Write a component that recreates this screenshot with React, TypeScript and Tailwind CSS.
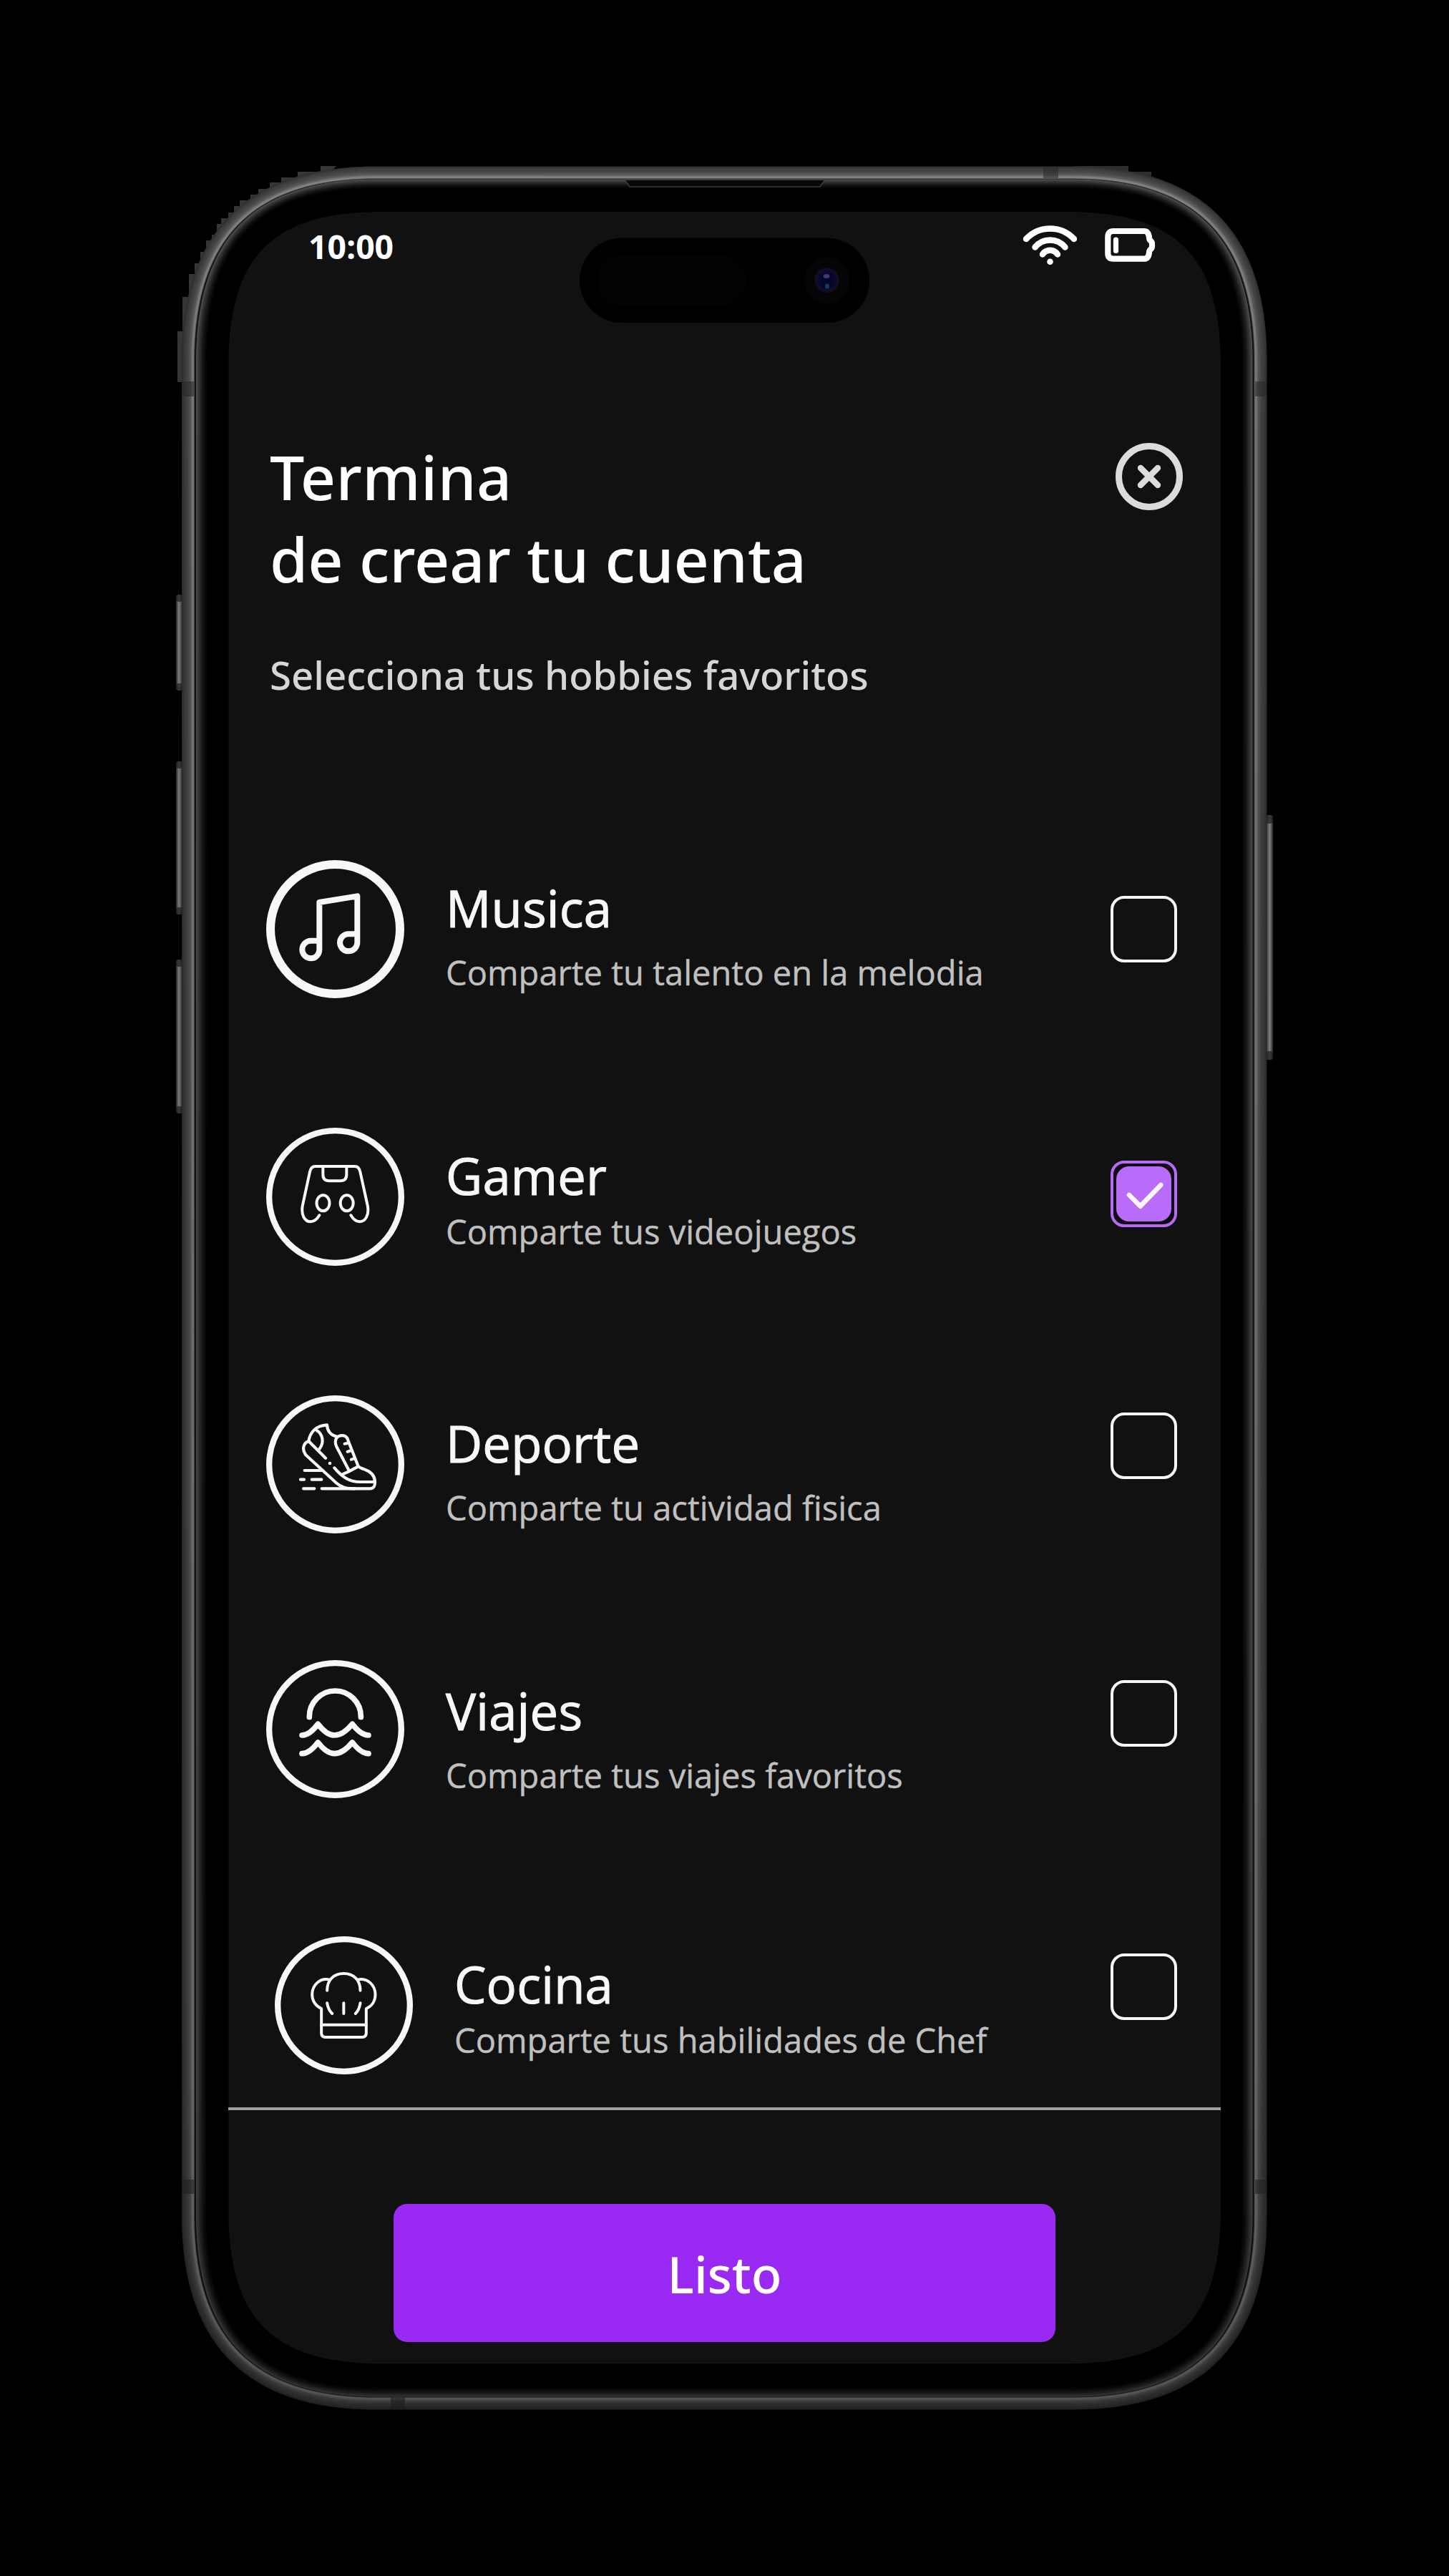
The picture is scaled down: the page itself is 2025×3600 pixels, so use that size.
import type { ReactNode } from 'react';

/* Rounded rectangle with continuous corners. */
function squircle(l: number, t: number, r: number, b: number, a: number, mid: number) {
  const c = (8 * mid - a) / 3;
  return (
    `M${l} ${t + a}C${l} ${t + c} ${l + c} ${t} ${l + a} ${t}` +
    `H${r - a}C${r - c} ${t} ${r} ${t + c} ${r} ${t + a}` +
    `V${b - a}C${r} ${b - c} ${r - c} ${b} ${r - a} ${b}` +
    `H${l + a}C${l + c} ${b} ${l} ${b - c} ${l} ${b - a}Z`
  );
}

/* Brightness of the metal rim, by distance from the outer edge. */
const rim: [number, number][] = [
  [0, 46], [2, 58], [8, 74], [12, 94], [15, 134], [16.5, 124], [17.5, 50], [18.5, 18],
  [19.5, 20], [20, 84], [22, 70], [25, 48], [29, 24], [33, 8], [36, 0],
];

function shade(i: number) {
  for (let k = 1; k < rim.length; k++) {
    const [x0, v0] = rim[k - 1];
    const [x1, v1] = rim[k];
    if (i <= x1) return Math.round(v0 + ((v1 - v0) * (i - x0)) / (x1 - x0));
  }
  return 0;
}

function ring(i: number) {
  const y = i * (i > 20 ? 0.88 : 0.98);
  return squircle(254 + i, 232.5 + y, 1770.5 - i, 3367.5 - y, 270 - i * 0.85, 68 - i * 0.293);
}

function PhoneFrame() {
  const steps = Array.from({ length: 73 }, (_, k) => k / 2);
  return (
    <svg className="absolute inset-0 h-[3600px] w-[2025px]" viewBox="0 0 2025 3600" fill="none">
      <defs>
        <linearGradient id="fall" x1="0" y1="230" x2="0" y2="3370" gradientUnits="userSpaceOnUse">
          <stop offset="0" stopColor="#000" stopOpacity="0" />
          <stop offset="0.12" stopColor="#000" stopOpacity="0.1" />
          <stop offset="0.85" stopColor="#000" stopOpacity="0.2" />
          <stop offset="1" stopColor="#000" stopOpacity="0.36" />
        </linearGradient>
        <linearGradient id="keyL" x1="246" x2="255" y1="0" y2="0" gradientUnits="userSpaceOnUse">
          <stop offset="0" stopColor="#262626" />
          <stop offset="0.45" stopColor="#7c7c7c" />
          <stop offset="1" stopColor="#2a2a2a" />
        </linearGradient>
        <linearGradient id="keyR" x1="1769" x2="1779" y1="0" y2="0" gradientUnits="userSpaceOnUse">
          <stop offset="0" stopColor="#2a2a2a" />
          <stop offset="0.55" stopColor="#808080" />
          <stop offset="1" stopColor="#262626" />
        </linearGradient>
        <radialGradient id="lens">
          <stop offset="0" stopColor="#03032e" />
          <stop offset="0.6" stopColor="#06062f" />
          <stop offset="0.85" stopColor="#131024" />
          <stop offset="1" stopColor="#08070f" />
        </radialGradient>
      </defs>
      <path
        fill="#363636"
        d="M470 232H448V240H416V248H393V255H377V264H361V272H350V280H335V288H327V297H319V305H309V313H303V328H296V336H288V352H280V368H272V383H264V415H255V463H248V534H262L300 420Z"
      />
      <path fill="#2e2e2e" d="M1500 232H1577V240H1609V250L1560 250Z" />
      {[
        [831, 134],
        [1064, 214],
        [1341, 215],
      ].map(([y, h]) => (
        <g key={y}>
          <rect x="246" y={y} width="9" height={h} rx="4" fill="url(#keyL)" />
          <rect x="246" y={y} width="9" height="10" rx="4" fill="#1c1c1c" opacity="0.7" />
          <rect x="246" y={y + h - 10} width="9" height="10" rx="4" fill="#1c1c1c" opacity="0.7" />
        </g>
      ))}
      <rect x="1769" y="1139" width="10" height="342" rx="4" fill="url(#keyR)" />
      <rect x="1769" y="1139" width="10" height="12" rx="4" fill="#1c1c1c" opacity="0.7" />
      <rect x="1769" y="1469" width="10" height="12" rx="4" fill="#1c1c1c" opacity="0.7" />
      {steps.map((i) => {
        const v = shade(i);
        return <path key={i} d={ring(i)} fill={`rgb(${v},${v},${v})`} />;
      })}
      <g fill="#2c2c2c" opacity="0.6">
        <rect x="254" y="533" width="17" height="21" />
        <rect x="1754" y="533" width="16" height="21" />
        <rect x="254" y="3046" width="17" height="20" />
        <rect x="1754" y="3046" width="16" height="20" />
        <rect x="1458" y="233" width="21" height="16" />
        <rect x="546" y="3351" width="20" height="16" />
      </g>
      <path d={ring(0)} fill="url(#fall)" />
      <path d="M874 252H1152L1146 261.5H880Z" fill="#070707" />
      <path d="M872 252.5H874L880 261H1146L1152 252.5H1154" stroke="#3c3c3c" strokeWidth="1.5" />
      <path d={squircle(319.3, 296, 1706, 3303.3, 215, 50)} fill="#111" />
      <rect x="810" y="332.5" width="405" height="118.5" rx="59.25" fill="#000" />
      <rect x="834" y="356" width="210" height="72" rx="36" fill="#020202" />
      <circle cx="1155.5" cy="392" r="32" fill="#050406" />
      <circle cx="1155.5" cy="391.5" r="18" fill="url(#lens)" />
      <ellipse cx="1155" cy="386" rx="4.5" ry="3" fill="#3c3a72" />
      <ellipse cx="1156" cy="400" rx="3" ry="3.5" fill="#163c56" />
    </svg>
  );
}

function Badge({ box, stroke, ring: w, children }: { box: string; stroke: number; ring: number; children: ReactNode }) {
  const [x, y] = box.split(' ').map(Number);
  return (
    <svg
      className="h-[193px] w-[193px] shrink-0"
      viewBox={box}
      fill="none"
      stroke="#f7f7f7"
      strokeWidth={stroke}
      strokeLinecap="round"
      strokeLinejoin="round"
    >
      <circle cx={x + 289.5} cy={y + 289.5} r={289.5 - w / 2} strokeWidth={w} />
      {children}
    </svg>
  );
}

const musicIcon = (
  <Badge box="98 97 579 579" stroke={24} ring={36}>
    <path
      strokeLinecap="butt"
      d="M321 435H286A37 37 0 0 0 249 472A37 37 0 0 0 286 509A35 37 0 0 0 321 472V274L480 248V443A37 36 0 0 1 443 479A36 36 0 0 1 407 443A36 36 0 0 1 443 407H480"
    />
  </Badge>
);

const gamerIcon = (
  <Badge box="98 79 579 579" stroke={12} ring={25}>
    <path d="M321 446C311 463 300 473 284 473C260 473 244 446 250 408L281 264Q286 241 303 241H470Q487 241 492 264L523 405C531 446 513 473 490 473C474 473 463 463 453 446" />
    <path d="M336 246V275Q336 302 362 302H409Q435 302 435 275V246" />
    <ellipse cx="336.5" cy="395" rx="27" ry="33" />
    <ellipse cx="436" cy="395" rx="27" ry="33" />
  </Badge>
);

const shoeIcon = (
  <Badge box="98 90 579 579" stroke={12.5} ring={25}>
    <path d="M276 282C282 243 308 217 353 214C354 238 368 258 392 262" />
    <path d="M309 236C335 252 343 288 321 315" />
    <path d="M445 405L393 305C383 284 389 264 409 259C426 256 437 264 441 278L484 388" />
    <path d="M427 293L440 290M439 326L453 322M455 359L466 355" />
    <path d="M276 282L347 353M384 394C415 430 444 453 492 453H550" />
    <path d="M276 282C253 290 247 318 264 340L393 458C410 473 432 481 462 481H533C549 481 555 470 554 450C552 424 535 409 512 401C500 397 490 394 484 388L445 409L418 421" />
    <path d="M259 405H335M242 443H257M289 443H330M254 481H300M331 481H470" />
    <circle cx="365" cy="375" r="7" fill="#f7f7f7" stroke="none" />
  </Badge>
);

const travelIcon = (
  <Badge box="98 90 579 579" stroke={23} ring={25}>
    <path d="M279 329V327A108 108 0 0 1 495 327V329" />
    <path d="M248 405C274 405 297 382 315 358C338 388 360 405 384 405C410 405 436 386 459 358C479 384 502 405 527 405" />
    <path d="M248 482C274 482 297 459 315 435C338 465 360 482 384 482C410 482 436 463 459 435C479 461 502 482 527 482" />
  </Badge>
);

const chefIcon = (
  <Badge box="132.5 79 579 579" stroke={12} ring={25}>
    <path d="M352 306C352 262 380 235 421.5 235S491 262 491 306" />
    <path d="M363 261C322 251 289 284 289 323C289 350 305 372 328 382V485Q328 502 345 502H499Q516 502 516 485V382C540 372 554 350 554 323C554 284 521 251 480 261" />
    <path d="M328 450H516M352 359C355 378 362 392 373 403M421.5 359V403M491 359C488 378 482 392 471 403" />
  </Badge>
);

type Hobby = {
  name: string;
  text: string;
  icon: ReactNode;
  row: string;
  title: string;
  desc: string;
  box: string;
  checked?: boolean;
};

const hobbies: Hobby[] = [
  { name: 'Musica', text: 'Comparte tu talento en la melodia', icon: musicIcon, row: 'pl-[53px] mb-[181px]', title: 'mt-[22px]', desc: 'mt-[17px]', box: 'mt-[50px]' },
  { name: 'Gamer', text: 'Comparte tus videojuegos', icon: gamerIcon, row: 'pl-[53px] mb-[181px]', title: 'mt-[22px]', desc: 'mt-[5px]', box: 'mt-[46px]', checked: true },
  { name: 'Deporte', text: 'Comparte tu actividad fisica', icon: shoeIcon, row: 'pl-[53px] mb-[177px]', title: 'mt-[22px]', desc: 'mt-[17px]', box: 'mt-[24px]' },
  { name: 'Viajes', text: 'Comparte tus viajes favoritos', icon: travelIcon, row: 'pl-[53px] mb-[193px]', title: 'mt-[26px]', desc: 'mt-[17px]', box: 'mt-[28px]' },
  { name: 'Cocina', text: 'Comparte tus habilidades de Chef', icon: chefIcon, row: 'pl-[65px]', title: 'mt-[22px]', desc: 'mt-[5px]', box: 'mt-[24px]' },
];

function Checkbox({ checked, className }: { checked?: boolean; className: string }) {
  if (checked) {
    return (
      <button className={`flex h-[93px] w-[93px] shrink-0 items-center justify-center rounded-[19px] border-4 border-[#b56bf2] bg-[#0e0b14] ${className}`}>
        <span className="flex h-[77px] w-[77px] items-center justify-center rounded-[18px] bg-[#b96bf9]">
          <svg className="h-[77px] w-[77px]" viewBox="180 240 231 231" fill="none" stroke="#f9f7fc" strokeWidth="20" strokeLinecap="round" strokeLinejoin="round">
            <path d="M234 360L281 407L367 318" />
          </svg>
        </span>
      </button>
    );
  }
  return <button className={`h-[93px] w-[93px] shrink-0 rounded-[19px] border-4 border-[#f5f5f5] ${className}`} />;
}

function HobbyRow({ h }: { h: Hobby }) {
  return (
    <li className={`flex h-[193px] items-start pr-[61px] ${h.row}`}>
      {h.icon}
      <div className="ml-[58px] grow whitespace-nowrap">
        <h2 className={`text-[70.5px] leading-[90px] tracking-[0.2px] text-[#f7f7f7] [-webkit-text-stroke:1.1px_#f7f7f7] ${h.title}`}>{h.name}</h2>
        <p className={`text-[47.1px] leading-[56px] text-[#c0c0c0] [-webkit-text-stroke:0.4px_#c0c0c0] ${h.desc}`}>{h.text}</p>
      </div>
      <Checkbox checked={h.checked} className={h.box} />
    </li>
  );
}

export default function App() {
  return (
    <div className="relative h-[3600px] w-[2025px] overflow-hidden bg-black font-['Open_Sans',sans-serif]">
      <PhoneFrame />
      <main className="relative ml-[319px] flex w-[1387px] flex-col pt-[296px]">
        <div className="flex h-[100px] items-start pl-[112px] pr-[91px] pt-[18px] text-white">
          <span className="mt-[1px] grow text-[46.3px] font-bold leading-[60px]">10:00</span>
          <svg className="mr-[38px] h-[58px] w-[76px]" viewBox="1429 314 76 58" fill="none" stroke="#fff" strokeWidth="8.4" strokeLinecap="round">
            <path d="M1434 334A46 46 0 0 1 1501 334M1446.5 345.5A27 27 0 0 1 1488.5 345.5M1457 355.5A12.5 12.5 0 0 1 1478 355.5" />
            <circle cx="1467.5" cy="365.7" r="4.3" fill="#fff" stroke="none" />
          </svg>
          <svg className="h-[58px] w-[72px]" viewBox="1543 314 72 58" fill="none" stroke="#fff" strokeWidth="8.2" strokeLinejoin="round">
            <path d="M1556 323H1599Q1605 323 1606 332Q1606 335 1608 336.5Q1610 338 1610 341V344Q1610 347 1608 348.5Q1606 350 1606 353Q1605 361.7 1599 361.7H1556Q1548.3 361.7 1548.3 354V331Q1548.3 323 1556 323Z" />
            <path d="M1559.5 335V350.5" strokeWidth="7.2" strokeLinecap="round" />
          </svg>
        </div>

        <header className="mt-[211px] flex h-[231px] items-start pl-[58px] pr-[53px]">
          <h1 className="mt-[1px] grow font-['Noto_Sans',sans-serif] text-[86px] font-medium leading-[115.4px] text-white">
            <span className="tracking-[0.4px]">Termina</span>
            <br />
            de crear tu cuenta
          </h1>
          <button className="mt-[12px] flex h-[94px] w-[94px] items-center justify-center rounded-full border-[9px] border-[#dcdcdc]">
            <svg className="h-[34px] w-[34px]" viewBox="0 0 34 34" stroke="#dcdcdc" strokeWidth="8.4" strokeLinecap="round">
              <path d="M5 5L29 29M29 5L5 29" />
            </svg>
          </button>
        </header>
        <p className="mt-[75px] h-[60px] whitespace-nowrap pl-[58px] font-['Noto_Sans',sans-serif] text-[54.5px] font-medium leading-[60px] text-[#d6d6d6]">
          Selecciona tus hobbies favoritos
        </p>

        <ul className="mt-[229px] flex flex-col">
          {hobbies.map((h) => (
            <HobbyRow key={h.name} h={h} />
          ))}
        </ul>

        <div className="mt-[46px] h-[4px] bg-[#a0a0a0]" />
        <button className="ml-[231px] mt-[131px] flex h-[193px] w-[925px] items-center justify-center rounded-[19px] bg-[#9a29f3] pt-[2px] font-['Noto_Sans',sans-serif] text-[70px] font-medium leading-[96px] text-white">
          Listo
        </button>
      </main>
    </div>
  );
}
